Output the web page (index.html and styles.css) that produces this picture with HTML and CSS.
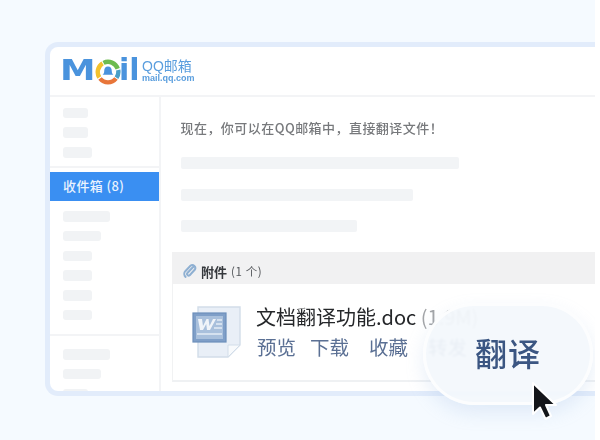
FILE: index.html
```html
<!DOCTYPE html>
<html lang="zh">
<head>
<meta charset="utf-8">
<title>QQ邮箱</title>
<link rel="stylesheet" href="styles.css">
</head>
<body>
<div class="stage">
  <div class="window">
    <header class="top">
      <div class="logo">
        <span class="logo-m">M</span>
        <svg class="logo-o" viewBox="0 0 26 26" width="26" height="26" aria-hidden="true">
          <path d="M8.500 3.900A10.200 10.200 0 0 1 22.700 9.800" fill="none" stroke="#6dbb4f" stroke-width="4.400"/>
          <path d="M23.200 11A10.200 10.200 0 0 1 21.500 18.700" fill="none" stroke="#4a9fc8" stroke-width="4.400"/>
          <path d="M21 19.500A10.200 10.200 0 0 1 5 19.500" fill="none" stroke="#e8763a" stroke-width="4.400"/>
          <path d="M4.300 18.500A10.200 10.200 0 0 1 7.600 4.400" fill="none" stroke="#f2c12e" stroke-width="4.400"/>
          <path d="M13 7.600c2.600 0 3.800 2.100 3.800 4.600 0 1.700.8 2.800 1.700 3.600H7.500c.9-.8 1.700-1.900 1.700-3.600 0-2.500 1.200-4.600 3.800-4.600z" fill="#4a93dd"/>
        </svg>
        <span class="logo-il">il</span>
        <div class="logo-side">
          <span class="logo-cn">QQ邮箱</span>
          <span class="logo-url">mail.qq.com</span>
        </div>
      </div>
    </header>
    <div class="body">
      <aside class="side">
        <div class="group group-top">
          <i class="sk w25"></i><i class="sk w25"></i><i class="sk w28"></i>
        </div>
        <div class="inbox">收件箱 (8)</div>
        <div class="group group-mid">
          <i class="sk w47"></i><i class="sk w38"></i><i class="sk w28"></i><i class="sk w28"></i><i class="sk w28"></i><i class="sk w28"></i>
        </div>
        <div class="group group-low">
          <i class="sk w47"></i><i class="sk w38"></i><i class="sk w25"></i>
        </div>
      </aside>
      <main class="main">
        <p class="lead">现在，你可以在QQ邮箱中，直接翻译文件！</p>
        <div class="bars">
          <i class="bar b1"></i><i class="bar b2"></i><i class="bar b3"></i>
        </div>
        <section class="attach">
          <div class="attach-head">
            <svg class="clip" viewBox="0 0 14 16" width="14" height="16" aria-hidden="true">
              <path d="M10.800 3.200 4.400 10a1.600 1.600 0 0 0 2.300 2.200l5-5.400a3 3 0 0 0-4.300-4.100L2.300 8.200a4.100 4.100 0 0 0 .3 5.700" fill="none" stroke="#8fb0d2" stroke-width="2" stroke-linecap="round"/>
            </svg>
            <b class="attach-title">附件</b><span class="attach-count">(1 个)</span>
          </div>
          <div class="attach-card">
            <svg class="doc" viewBox="0 0 50 52" width="50" height="52" aria-hidden="true">
              <path d="M6 1h42v38L36 51H6z" fill="#e9eff7" stroke="#d2dde9" stroke-width="1.400"/>
              <path d="M36 51V39h12z" fill="#f8fafc" stroke="#d2dde9" stroke-width="1"/>
              <rect x="1" y="7" width="33" height="29" fill="#7f9fc8" stroke="#6d8fbb" stroke-width="1.200"/>
              <rect x="4" y="10" width="27" height="23" fill="#a9c0dc"/>
              <path d="M6 13h4l1 7 3.500-7h2l1 7 3.500-7h3l-6 11h-3l-.8-6-3.200 6h-3z" fill="#f0f4f9"/>
              <path d="M25 14h5M24 18h6M22 22h8M5 28h25" stroke="#e4ecf5" stroke-width="1.400"/>
            </svg>
            <div class="file">
              <div class="file-name">文档翻译功能.doc <span class="file-size">(1.9M)</span></div>
              <div class="file-actions"><a>预览</a><a>下载</a><a>收藏</a><a>转发</a></div>
            </div>
          </div>
        </section>
      </main>
    </div>
  </div>
  <div class="bubble">翻译</div>
  <svg class="cursor" viewBox="0 0 28 42" width="28" height="42" aria-hidden="true">
    <path d="M2 2V33L9 26.500 14.500 38 20 35 15 24H25Z" fill="#14161a" stroke="#fff" stroke-width="2" stroke-linejoin="round"/>
  </svg>
</div>
</body>
</html>
```

FILE: styles.css
```css
* { box-sizing: border-box; }
html, body { margin: 0; padding: 0; background: #fff; }
body { width: 600px; height: 440px; overflow: hidden; font-family: "Noto Sans CJK SC", "Liberation Sans", sans-serif; }

.stage {
  position: relative;
  width: 595px;
  height: 440px;
  padding: 42px 0 0 45px;
  background: #f5faff;
  overflow: hidden;
}

.window {
  width: 550px;
  height: 354px;
  border: 5px solid #e2ecfb;
  border-right-width: 0;
  border-radius: 13px 0 0 13px;
  background: #fff;
  display: flex;
  flex-direction: column;
  overflow: hidden;
  filter: blur(.35px);
}

.top {
  height: 50px;
  flex: none;
  border-bottom: 2px solid #f3f4f6;
  padding: 9px 0 0 9.500px;
}
.logo { display: flex; align-items: center; height: 28px; color: #4a93dd; }
.logo-m {
  display: block;
  flex: none;
  width: 35px;
  font: 700 29px/28px "DejaVu Sans", sans-serif;
  transform: scaleX(1.23);
  transform-origin: 0 50%;
}
.logo-o { flex: none; margin-top: 3px; }
.logo-il { font: 700 30px/28px "DejaVu Sans", sans-serif; margin-left: -1.500px; }
.logo-side { display: flex; flex-direction: column; margin: 3px 0 0 2.500px; color: #5a9ede; }
.logo-cn { font: 14px/14px "Liberation Sans", "Noto Sans CJK SC", sans-serif; white-space: nowrap; }
.logo-url { font: 700 9px/11px "Liberation Sans", sans-serif; }

.body { flex: 1; display: flex; min-height: 0; }

.side {
  width: 111px;
  flex: none;
  border-right: 2px solid #f3f4f6;
  display: flex;
  flex-direction: column;
  overflow: hidden;
}
.group { display: flex; flex-direction: column; gap: 9.300px; padding-left: 13px; flex: none; }
.group-top { height: 71px; padding-top: 10.500px; border-bottom: 2px solid #f3f4f6; }
.group-mid { height: 133px; padding-top: 10px; }
.group-low { border-top: 2px solid #f3f4f6; padding-top: 13px; }
.sk { display: block; height: 10.500px; border-radius: 3px; background: #f1f3f5; flex: none; }
.w25 { width: 25px; }
.w28 { width: 29px; }
.w38 { width: 38px; }
.w47 { width: 47px; }

.inbox {
  margin-top: 4px;
  height: 29px;
  flex: none;
  background: #3a8ff2;
  color: #eaf3fe;
  font-size: 13px;
  font-weight: 500;
  line-height: 28px;
  letter-spacing: .4px;
  padding-left: 13px;
}

.main { flex: 1; min-width: 0; padding-top: 22px; }
.lead { margin: 0 0 0 19.500px; font-size: 13px; font-weight: 500; line-height: 18px; letter-spacing: .45px; color: #77797c; white-space: nowrap; }
.bars { display: flex; flex-direction: column; gap: 19.500px; margin: 20px 0 0 20px; }
.bar { display: block; height: 12px; border-radius: 2px; background: #f2f4f6; }
.b1 { width: 278px; }
.b2 { width: 232px; }
.b3 { width: 176px; }

.attach { margin: 20px 0 0 11px; }
.attach-head {
  height: 32px;
  background: #f1f1f2;
  display: flex;
  align-items: center;
  padding: 6px 0 0 11px;
  white-space: nowrap;
}
.clip { flex: none; margin-right: 4px; }
.attach-title { font-size: 13px; color: #35383c; font-weight: 700; }
.attach-count { font-size: 11.500px; color: #55585c; margin-left: 4px; letter-spacing: .6px; }
.attach-card {
  height: 98px;
  border-left: 1px solid #f1f2f3;
  border-bottom: 2px solid #eff1f3;
  display: flex;
  padding: 22px 0 0 19px;
}
.doc { flex: none; }
.file { margin: -2px 0 0 15px; white-space: nowrap; }
.file-name { font-size: 20px; line-height: 26px; color: #25272a; margin-left: -1px; }
.file-size { color: #a3a5a8; }
.file-actions { display: flex; gap: 20px; margin-top: 4px; font-size: 19.500px; line-height: 26px; color: #5b7094; }
.file-actions a:first-child { margin-right: -6px; }

.bubble {
  position: absolute;
  left: 423px;
  top: 303px;
  width: 170px;
  height: 102px;
  border-radius: 51px;
  border: 3px solid rgba(255,255,255,.75);
  background: rgba(243,247,252,.93);
  backdrop-filter: blur(1px);
  box-shadow: 0 8px 18px rgba(150,180,225,.22);
  color: #3b5682;
  font-size: 32px;
  font-weight: 500;
  line-height: 93px;
  letter-spacing: 1px;
  text-align: center;
}

.cursor { position: absolute; left: 531px; top: 381px; }
```
